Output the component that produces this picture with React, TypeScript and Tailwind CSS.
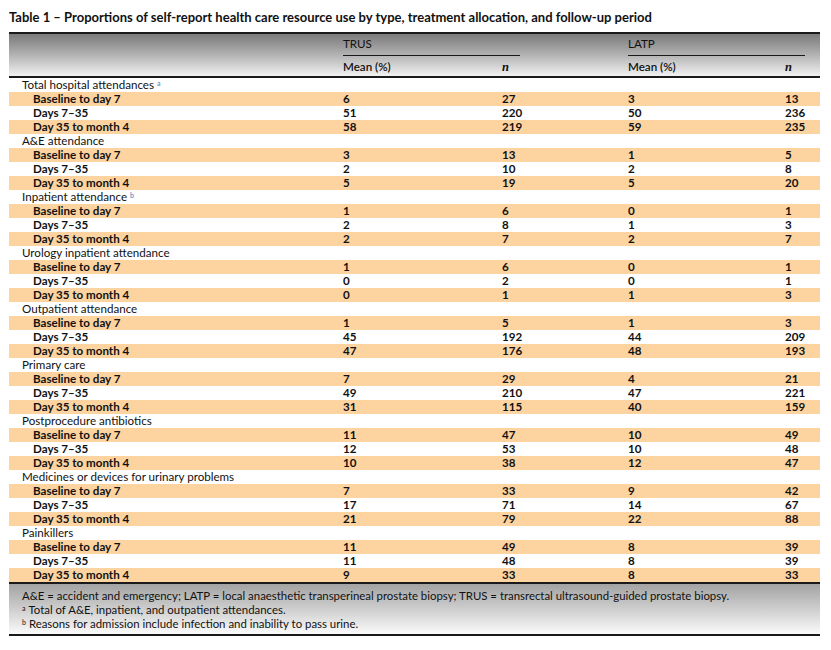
const groups = [
  {
    label: "Total hospital attendances",
    sup: "a",
    rows: [
      ["6", "27", "3", "13"],
      ["51", "220", "50", "236"],
      ["58", "219", "59", "235"],
    ],
  },
  {
    label: "A&E attendance",
    rows: [
      ["3", "13", "1", "5"],
      ["2", "10", "2", "8"],
      ["5", "19", "5", "20"],
    ],
  },
  {
    label: "Inpatient attendance",
    sup: "b",
    rows: [
      ["1", "6", "0", "1"],
      ["2", "8", "1", "3"],
      ["2", "7", "2", "7"],
    ],
  },
  {
    label: "Urology inpatient attendance",
    rows: [
      ["1", "6", "0", "1"],
      ["0", "2", "0", "1"],
      ["0", "1", "1", "3"],
    ],
  },
  {
    label: "Outpatient attendance",
    rows: [
      ["1", "5", "1", "3"],
      ["45", "192", "44", "209"],
      ["47", "176", "48", "193"],
    ],
  },
  {
    label: "Primary care",
    rows: [
      ["7", "29", "4", "21"],
      ["49", "210", "47", "221"],
      ["31", "115", "40", "159"],
    ],
  },
  {
    label: "Postprocedure antibiotics",
    rows: [
      ["11", "47", "10", "49"],
      ["12", "53", "10", "48"],
      ["10", "38", "12", "47"],
    ],
  },
  {
    label: "Medicines or devices for urinary problems",
    rows: [
      ["7", "33", "9", "42"],
      ["17", "71", "14", "67"],
      ["21", "79", "22", "88"],
    ],
  },
  {
    label: "Painkillers",
    rows: [
      ["11", "49", "8", "39"],
      ["11", "48", "8", "39"],
      ["9", "33", "8", "33"],
    ],
  },
]

const periods = ["Baseline to day 7", "Days 7–35", "Day 35 to month 4"]
const cols = "grid grid-cols-[334px_159px_126px_157px_1fr]"

export default function App() {
  return (
    <div className="w-[831px] h-[650px] bg-white text-[#111] font-['Lato',sans-serif] text-[11.6px] leading-[14px] pl-[9px] pr-[11px]">
      <h1 className="pt-[10px] h-[32px] font-bold text-[13px] leading-[14px]">
        Table 1 – Proportions of self-report health care resource use by type, treatment allocation, and follow-up period
      </h1>

      <div className="border-t-2 border-[#1a1a1a] bg-gradient-to-b from-[#7a7a7a] via-[#b3b3b3] to-[#f2f2f2] h-[46px] border-b-2">
        <div className={`${cols} h-[22px]`}>
          <div />
          <div className="col-span-2">
            <div className="w-[177px] h-[22px] border-b-[1.5px] border-[#1a1a1a] pt-[3px]">TRUS</div>
          </div>
          <div className="col-span-2">
            <div className="w-[177px] h-[22px] border-b-[1.5px] border-[#1a1a1a] pt-[3px]">LATP</div>
          </div>
        </div>
        <div className={`${cols} h-[22px] pt-[4px] font-semibold`}>
          <div />
          <div>Mean (%)</div>
          <div className="font-['Liberation_Serif',serif] italic font-bold text-[12.5px]">n</div>
          <div>Mean (%)</div>
          <div className="font-['Liberation_Serif',serif] italic font-bold text-[12.5px]">n</div>
        </div>
      </div>

      <div>
        {groups.map((g) => (
          <div key={g.label}>
            <div className={`${cols} h-[14px]`}>
              <div className="pl-[13px]">
                {g.label}
                {g.sup && <sup className="ml-[3px] text-[7px] text-[#5b8fc7] font-semibold">{g.sup}</sup>}
              </div>
            </div>
            {g.rows.map((r, i) => (
              <div
                key={i}
                className={`${cols} h-[14px] font-bold ${i === 1 ? "bg-white" : "bg-[#fdd3a0]"}`}
              >
                <div className="pl-[24px]">{periods[i]}</div>
                {r.map((v, j) => (
                  <div key={j}>{v}</div>
                ))}
              </div>
            ))}
          </div>
        ))}
      </div>

      <div className="border-t-2 border-b-2 border-[#1a1a1a] bg-gradient-to-b from-[#a3a3a3] to-[#fbfbfb] h-[54px] pl-[13px] pt-[5px] text-[11.4px] leading-[14px]">
        <div>A&amp;E = accident and emergency; LATP = local anaesthetic transperineal prostate biopsy; TRUS = transrectal ultrasound-guided prostate biopsy.</div>
        <div>
          <sup className="text-[7px] mr-[3px]">a</sup>Total of A&amp;E, inpatient, and outpatient attendances.
        </div>
        <div>
          <sup className="text-[7px] mr-[3px]">b</sup>Reasons for admission include infection and inability to pass urine.
        </div>
      </div>
    </div>
  )
}
